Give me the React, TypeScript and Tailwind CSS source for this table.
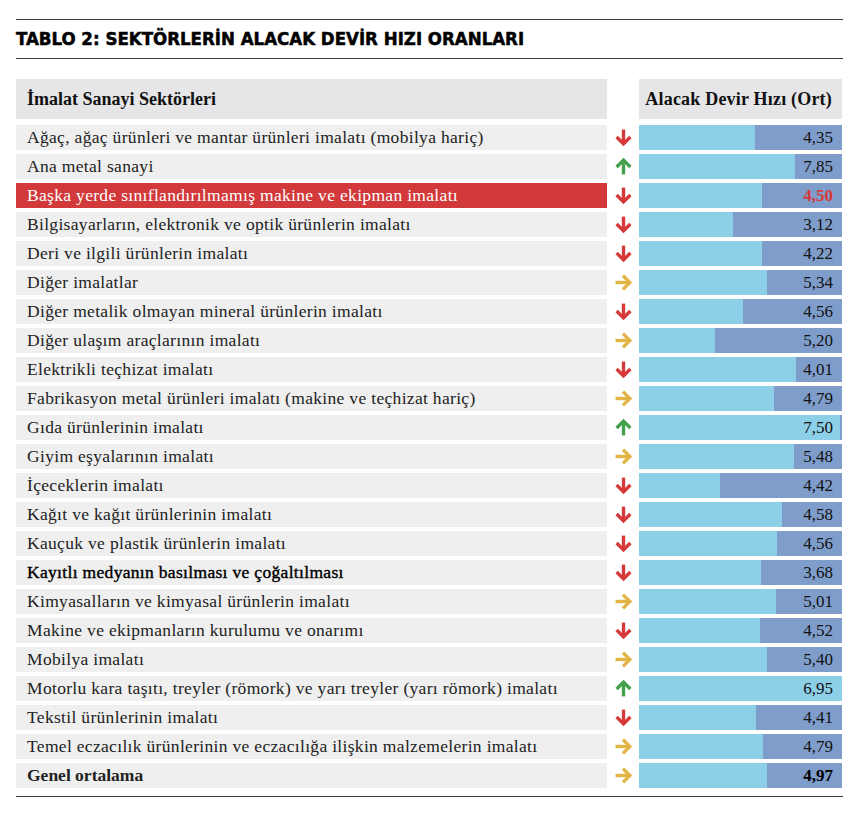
import React from "react";

type Trend = "down" | "up" | "right";

const rows: { label: string; value: string; fill: number; trend: Trend; strong?: boolean; semi?: boolean; hl?: boolean }[] = [
  { label: "Ağaç, ağaç ürünleri ve mantar ürünleri imalatı (mobilya hariç)", value: "4,35", fill: 116, trend: "down" },
  { label: "Ana metal sanayi", value: "7,85", fill: 156, trend: "up" },
  { label: "Başka yerde sınıflandırılmamış makine ve ekipman imalatı", value: "4,50", fill: 123, trend: "down", hl: true },
  { label: "Bilgisayarların, elektronik ve optik ürünlerin imalatı", value: "3,12", fill: 94, trend: "down" },
  { label: "Deri ve ilgili ürünlerin imalatı", value: "4,22", fill: 123, trend: "down" },
  { label: "Diğer imalatlar", value: "5,34", fill: 128, trend: "right" },
  { label: "Diğer metalik olmayan mineral ürünlerin imalatı", value: "4,56", fill: 104, trend: "down" },
  { label: "Diğer ulaşım araçlarının imalatı", value: "5,20", fill: 76, trend: "right" },
  { label: "Elektrikli teçhizat imalatı", value: "4,01", fill: 157, trend: "down" },
  { label: "Fabrikasyon metal ürünleri imalatı (makine ve teçhizat hariç)", value: "4,79", fill: 135, trend: "right" },
  { label: "Gıda ürünlerinin imalatı", value: "7,50", fill: 201, trend: "up" },
  { label: "Giyim eşyalarının imalatı", value: "5,48", fill: 155, trend: "right" },
  { label: "İçeceklerin imalatı", value: "4,42", fill: 81, trend: "down" },
  { label: "Kağıt ve kağıt ürünlerinin imalatı", value: "4,58", fill: 143, trend: "down" },
  { label: "Kauçuk ve plastik ürünlerin imalatı", value: "4,56", fill: 138, trend: "down" },
  { label: "Kayıtlı medyanın basılması ve çoğaltılması", value: "3,68", fill: 122, trend: "down", semi: true },
  { label: "Kimyasalların ve kimyasal ürünlerin imalatı", value: "5,01", fill: 137, trend: "right" },
  { label: "Makine ve ekipmanların kurulumu ve onarımı", value: "4,52", fill: 121, trend: "down" },
  { label: "Mobilya imalatı", value: "5,40", fill: 128, trend: "right" },
  { label: "Motorlu kara taşıtı, treyler (römork) ve yarı treyler (yarı römork) imalatı", value: "6,95", fill: 203, trend: "up" },
  { label: "Tekstil ürünlerinin imalatı", value: "4,41", fill: 117, trend: "down" },
  { label: "Temel eczacılık ürünlerinin ve eczacılığa ilişkin malzemelerin imalatı", value: "4,79", fill: 124, trend: "right" },
  { label: "Genel ortalama", value: "4,97", fill: 128, trend: "right", strong: true },
];

function Arrow({ trend }: { trend: Trend }) {
  if (trend === "down")
    return (
      <svg width="19" height="19" viewBox="0 0 18 18" fill="none" stroke="#d6393a" strokeWidth="3.2">
        <path d="M9 1.5V15" />
        <path d="M2.5 8.5L9 15L15.5 8.5" />
      </svg>
    );
  if (trend === "up")
    return (
      <svg width="19" height="19" viewBox="0 0 18 18" fill="none" stroke="#45a04d" strokeWidth="3.2">
        <path d="M9 16.5V3" />
        <path d="M2.5 9.5L9 3L15.5 9.5" />
      </svg>
    );
  return (
    <svg width="19" height="19" viewBox="0 0 18 18" fill="none" stroke="#e2b446" strokeWidth="3.2">
      <path d="M1.5 9H15" />
      <path d="M8.5 2.5L15 9L8.5 15.5" />
    </svg>
  );
}

export default function App() {
  return (
    <div className="w-[860px] h-[814px] bg-white px-[16px] pt-[19px] font-['Liberation_Serif',serif]">
      <div className="w-[827px] h-[40px] border-y border-[#3a3a3a] flex items-center">
        <h1 className="font-['DejaVu_Sans',sans-serif] font-stretch-condensed font-bold text-[18.5px] leading-none text-black pt-[1px] [-webkit-text-stroke:0.5px_black]">
          TABLO 2: SEKTÖRLERİN ALACAK DEVİR HIZI ORANLARI
        </h1>
      </div>

      <div className="mt-[20px] flex h-[40px]">
        <div className="w-[591px] bg-[#e6e6e8] flex items-center pl-[11px] text-[18px] font-bold text-[#111]">
          İmalat Sanayi Sektörleri
        </div>
        <div className="w-[32px]" />
        <div className="w-[203px] bg-[#e6e6e8] flex items-center justify-end pr-[10px] text-[18px] tracking-[0.2px] font-bold text-[#111]">
          Alacak Devir Hızı (Ort)
        </div>
      </div>

      <div className="mt-[6px] flex flex-col gap-[4px]">
        {rows.map((r) => (
          <div key={r.label} className="flex h-[25px]">
            <div
              className={`w-[591px] flex items-center pl-[11px] text-[17.5px] tracking-[0.32px] whitespace-nowrap ${
                r.hl ? "bg-[#d2393a] text-white" : "bg-[#efefef] text-[#222]"
              } ${r.strong ? "font-bold text-[#111] tracking-normal" : ""} ${
                r.semi ? "text-black [-webkit-text-stroke:0.4px_black]" : ""
              }`}
            >
              {r.label}
            </div>
            <div className="w-[32px] flex items-center justify-center">
              <Arrow trend={r.trend} />
            </div>
            <div className="relative w-[203px] bg-[#7f9dcb] flex">
              <div className="h-full bg-[#8ecfe8]" style={{ width: r.fill }} />
              <span
                className={`absolute right-[9px] top-0 h-full flex items-center text-[17px] ${
                  r.hl ? "text-[#d6393a] font-bold" : r.strong ? "font-bold text-black" : "text-[#111]"
                }`}
              >
                {r.value}
              </span>
            </div>
          </div>
        ))}
      </div>

      <div className="mt-[8px] w-[827px] border-t border-[#3a3a3a]" />
    </div>
  );
}
